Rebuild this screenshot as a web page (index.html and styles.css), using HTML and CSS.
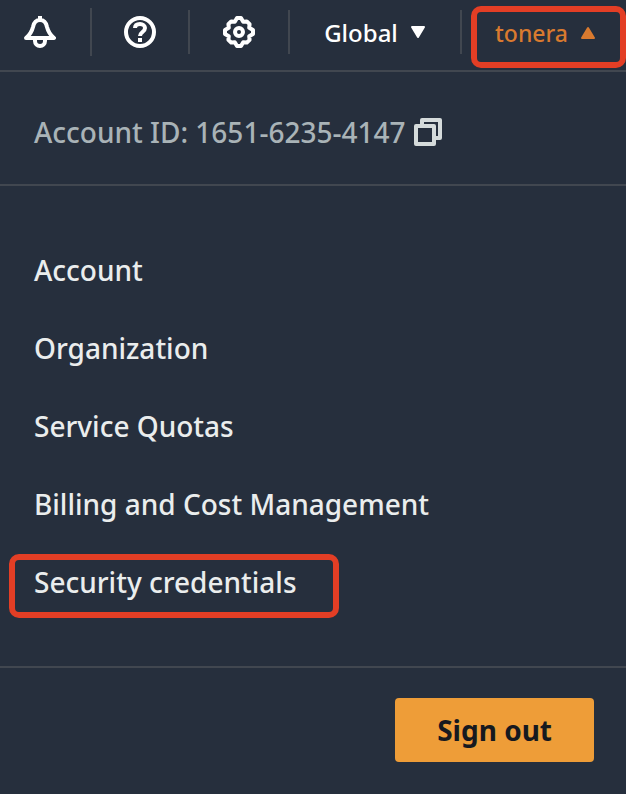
FILE: index.html
```html
<!DOCTYPE html>
<html lang="en">
<head>
  <meta charset="UTF-8">
  <meta name="viewport" content="width=device-width, initial-scale=1">
  <title>Account menu</title>
  <link rel="stylesheet" href="styles.css">
</head>
<body>

<header class="topbar">
  <button class="nav-btn bell" type="button" aria-label="Notifications">
    <svg class="icon" viewBox="0 0 32 32">
      <path d="M16 0v4M2 22c5-4 6-7 7-11 1-5 3-7 7-7s6 2 7 7c1 4 2 7 7 11z"/>
      <path d="M11 22v3a5 5 0 0 0 10 0v-3"/>
    </svg>
  </button>
  <button class="nav-btn" type="button" aria-label="Help">
    <svg class="icon" viewBox="0 0 32 32">
      <circle cx="16" cy="16" r="14"/>
      <path d="M11 12c0-3 2-4 5-4s5 2 5 4c0 4-5 4-5 8M16 22v4"/>
    </svg>
  </button>
  <button class="nav-btn" type="button" aria-label="Settings">
    <svg class="icon" viewBox="0 0 32 32">
      <path d="M14 2h4l2.200 3.800 3.600-.4 2.800 2.800-.4 3.600L30 14v4l-3.800 2.200.4 3.600-2.800 2.800-3.600-.4L18 30h-4l-2.200-3.800-3.600.4-2.800-2.800.4-3.600L2 18v-4l3.800-2.200-.4-3.600 2.800-2.800 3.600.4z"/>
      <circle cx="16" cy="16" r="4"/>
    </svg>
  </button>
  <button class="nav-btn" type="button">Global
    <svg class="caret" viewBox="0 0 16 14"><path d="M2 2h12L8 12z"/></svg>
  </button>
  <button class="nav-btn user highlight" type="button" aria-expanded="true">tonera
    <svg class="caret" viewBox="0 0 16 14"><path d="M2 12h12L8 2z"/></svg>
  </button>
</header>

<main class="menu">
  <div class="account-id">
    <span>Account ID: 1651-6235-4147</span>
    <button class="copy" type="button" aria-label="Copy account ID">
      <svg class="icon-copy" viewBox="0 0 28 28">
        <path d="M2 8h18v18H2zM8 8V2h18v18h-6"/>
      </svg>
    </button>
  </div>
  <nav class="links">
    <a href="#">Account</a>
    <a href="#">Organization</a>
    <a href="#">Service Quotas</a>
    <a href="#">Billing and Cost Management</a>
    <a href="#" class="highlight">Security credentials</a>
  </nav>
  <div class="menu-footer">
    <button class="sign-out" type="button">Sign out</button>
  </div>
</main>

</body>
</html>
```
FILE: styles.css
```css
* {
  box-sizing: border-box;
}
body {
  margin: 0;
  min-height: 100vh;
  background: #262f3d;
  color: #eaeded;
  font-family: "Noto Sans", "Open Sans", sans-serif;
  font-weight: 500;
}
button {
  font: inherit;
  color: inherit;
  background: none;
  border: 0;
  padding: 0;
  cursor: pointer;
}
svg {
  display: block;
  fill: none;
  stroke: currentColor;
  stroke-linejoin: round;
}

/* top bar */
.topbar {
  display: grid;
  grid-template-columns: 92px 98px 100px 172px 1fr;
  grid-template-rows: 64px;
  align-items: center;
  padding-bottom: 6px;
  border-bottom: 2px solid #414750;
  color: #fff;
  font-size: 24px;
}
.nav-btn {
  display: flex;
  align-items: center;
  justify-content: center;
  gap: 12px;
  height: 44px;
  border-right: 2px solid #414750;
}
.bell {
  height: 48px;
  padding-right: 10px;
}
.icon {
  width: 32px;
  height: 32px;
  stroke-width: 4;
}
.caret {
  width: 16px;
  height: 14px;
  fill: currentColor;
  stroke-width: 2;
}
.user {
  height: 62px;
  margin: 10px 0 0 9px;
  padding: 0 6px 8px 0;
  color: #d97a2f;
  font-size: 23px;
}

/* dropdown */
.account-id {
  display: flex;
  align-items: center;
  gap: 8px;
  height: 114px;
  padding: 8px 34px 0;
  border-bottom: 2px solid #414750;
  color: #a9b3b7;
  font-size: 28px;
}
.copy {
  color: #d5dbdb;
}
.icon-copy {
  width: 28px;
  height: 28px;
  stroke-width: 4;
}
.links {
  display: flex;
  flex-direction: column;
  align-items: flex-start;
  gap: 14px;
  padding: 56px 9px 48px;
  border-bottom: 2px solid #414750;
}
.links a {
  padding: 8px 36px 16px 19px;
  border: 6px solid transparent;
  color: inherit;
  font-size: 28px;
  line-height: 28px;
  text-decoration: none;
}
.menu-footer {
  display: flex;
  justify-content: flex-end;
  padding: 30px 32px;
}
.sign-out {
  height: 64px;
  padding: 0 42px;
  border-radius: 4px;
  background: #ee9d38;
  color: #16191f;
  font-size: 28px;
  font-weight: 700;
}

.topbar .highlight,
.links .highlight {
  border: 6px solid #e33e25;
  border-radius: 10px;
}
```
